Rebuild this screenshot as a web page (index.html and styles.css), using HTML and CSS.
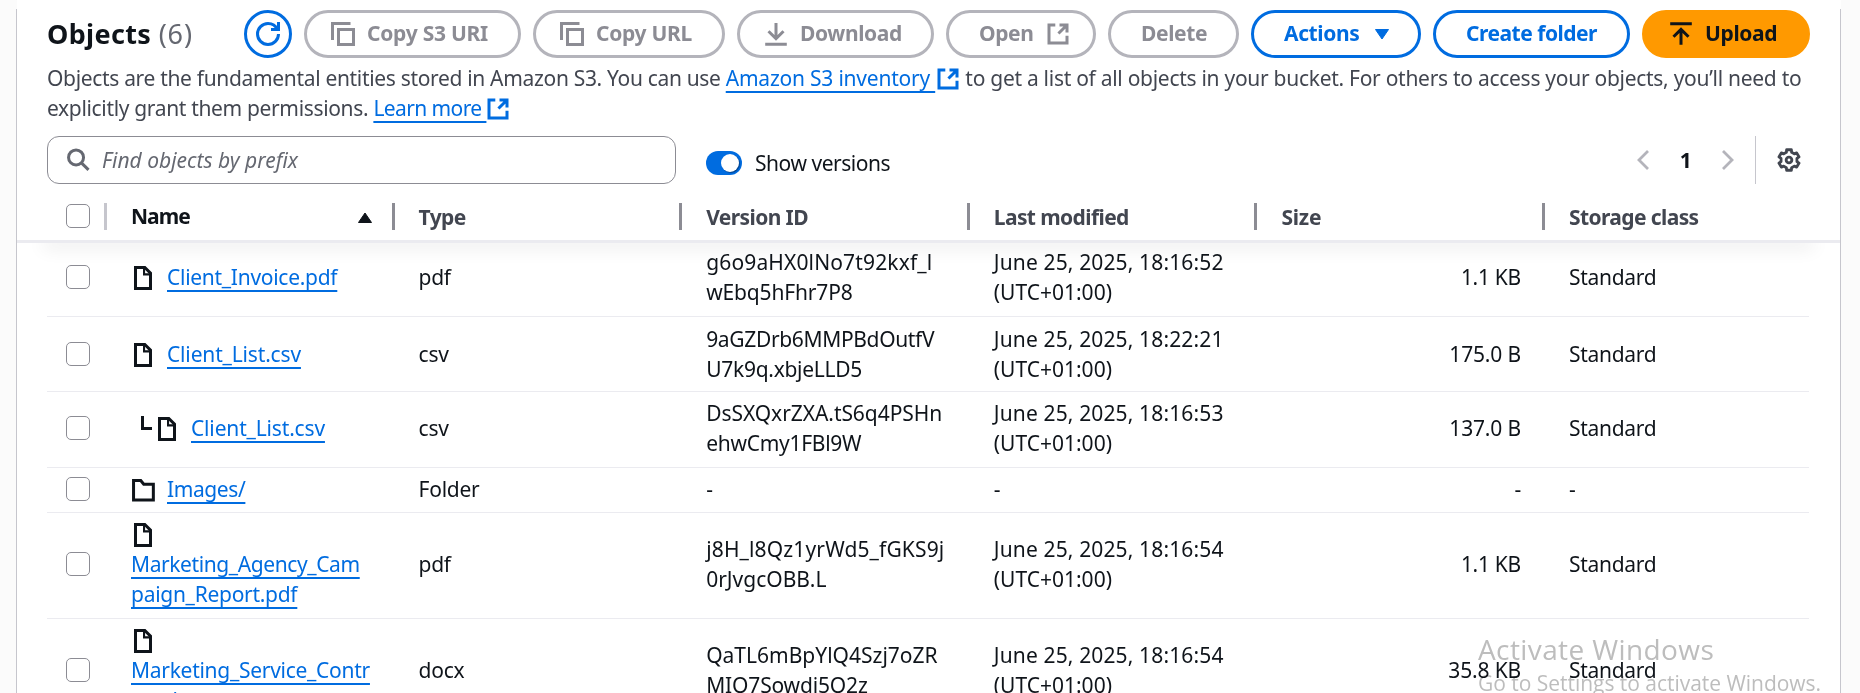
FILE: index.html
```html
<!DOCTYPE html>
<html lang="en">
<head>
<meta charset="utf-8">
<title>Objects</title>
<link rel="stylesheet" href="styles.css">
</head>
<body>
<svg class="defs" width="0" height="0">
  <symbol id="copy" viewBox="0 0 16 16"><path d="M1 12V1h12M5 5h10v10H5z"/></symbol>
  <symbol id="download" viewBox="0 0 16 16"><path d="M8 .7V11M3 6.2l5 4.9 5-4.9M.8 14.9h14.4"/></symbol>
  <symbol id="upload" viewBox="0 0 16 16"><path d="M.8 1.1h14.4M8 15.2V5M3 9.8l5-4.9 5 4.9"/></symbol>
  <symbol id="external" viewBox="0 0 16 16"><path d="M9 2h5v5M8.3 7.7 14 2M14 9.2V14H2V2h4.2"/></symbol>
  <symbol id="refresh" viewBox="0 0 16 16"><path d="M15 8c0 3.87-3.13 7-7 7s-7-3.13-7-7 3.13-7 7-7c2.79 0 5.2 1.63 6.33 4M10 5h5V0"/></symbol>
  <symbol id="file" viewBox="0 0 16 16"><path d="M3 1h6.2L13 4.800V15H3z"/><path class="thin" d="M8.7 1v4.600H13"/></symbol>
  <symbol id="folder" viewBox="0 0 16 16"><path d="M1.700 14.600V1.700h4.800l2 2.500h6.400v10.400z"/></symbol>
  <symbol id="search" viewBox="0 0 16 16"><circle cx="6.7" cy="6.3" r="5"/><path d="M10.300 9.900l4.700 4.700"/></symbol>
  <symbol id="gear" viewBox="0 0 16 16"><path d="M6.430 1.180H9.570L9.760 2.900 11.540 3.920 13.120 3.230 14.690 5.950 13.300 6.970V9.030L14.690 10.050 13.120 12.770 11.540 12.080 9.760 13.100 9.570 14.820H6.430L6.240 13.100 4.460 12.080 2.880 12.770 1.310 10.050 2.700 9.030V6.970L1.310 5.950 2.880 3.230 4.460 3.920 6.240 2.900Z"/><circle cx="8" cy="8" r="1.900"/></symbol>
</svg>
<div class="top-strip"></div>
<main class="panel">
  <header class="bar">
    <h1 class="title">Objects <span class="count">(6)</span></h1>
    <div class="actions">
      <button class="btn primary-line refresh"><svg class="icon"><use href="#refresh"/></svg></button>
      <button class="btn off copy-uri"><svg class="icon"><use href="#copy"/></svg><span>Copy S3 URI</span></button>
      <button class="btn off copy-url"><svg class="icon"><use href="#copy"/></svg><span>Copy URL</span></button>
      <button class="btn off download"><svg class="icon"><use href="#download"/></svg><span>Download</span></button>
      <button class="btn off open"><span>Open</span><svg class="icon"><use href="#external"/></svg></button>
      <button class="btn off delete"><span>Delete</span></button>
      <button class="btn primary-line menu"><span>Actions</span><svg class="caret" viewBox="0 0 16 13"><path d="M1.500 1.500h13L8 11z"/></svg></button>
      <button class="btn primary-line create"><span>Create folder</span></button>
      <button class="btn upload"><svg class="icon"><use href="#upload"/></svg><span>Upload</span></button>
    </div>
  </header>
  <p class="desc">Objects are the fundamental entities stored in Amazon S3. You can use <a class="link inv">Amazon S3 inventory&nbsp;</a><svg class="icon ext"><use href="#external"/></svg> <span class="rest">to get a list of all objects in your bucket. For others to access your objects, you’ll need to</span><br><span class="second">explicitly grant them permissions. </span><a class="link more">Learn more&nbsp;</a><svg class="icon ext"><use href="#external"/></svg></p>
  <div class="tools">
    <div class="search"><svg class="icon"><use href="#search"/></svg><span>Find objects by prefix</span></div>
    <div class="toggle"><span class="switch"><span class="knob"></span></span><span>Show versions</span></div>
    <div class="pager">
      <svg class="chev" viewBox="0 0 12 20"><path d="M11 1 2 10l9 9"/></svg>
      <span class="page">1</span>
      <svg class="chev" viewBox="0 0 12 20"><path d="M1 1l9 9-9 9"/></svg>
    </div>
    <div class="prefs"><svg class="icon"><use href="#gear"/></svg></div>
  </div>
  <section class="table">
    <div class="row head">
      <div class="cell pick"><span class="box"></span></div>
      <div class="cell sorted">Name<svg class="caret up" viewBox="0 0 16 13"><path d="M1.500 11.500h13L8 2z"/></svg></div>
      <div class="cell">Type</div>
      <div class="cell">Version ID</div>
      <div class="cell">Last modified</div>
      <div class="cell size-h">Size</div>
      <div class="cell last">Storage class</div>
    </div>
    <div class="row r1">
      <div class="cell pick"><span class="box"></span></div>
      <div class="cell name"><svg class="icon"><use href="#file"/></svg><a class="link">Client_Invoice.pdf</a></div>
      <div class="cell">pdf</div>
      <div class="cell"><span class="wide">g6o9aHX0lNo7t92kxf_l</span><br><span class="snug">wEbq5hFhr7P8</span></div>
      <div class="cell"><span class="wide">June 25, 2025, 18:16:52</span><br><span class="flat">(UTC+01:00)</span></div>
      <div class="cell size">1.1 KB</div>
      <div class="cell">Standard</div>
    </div>
    <div class="row r2">
      <div class="cell pick"><span class="box"></span></div>
      <div class="cell name"><svg class="icon"><use href="#file"/></svg><a class="link snug">Client_List.csv</a></div>
      <div class="cell">csv</div>
      <div class="cell"><span class="close">9aGZDrb6MMPBdOutfV</span><br>U7k9q.xbjeLLD5</div>
      <div class="cell"><span class="wide">June 25, 2025, 18:22:21</span><br><span class="flat">(UTC+01:00)</span></div>
      <div class="cell size snug">175.0 B</div>
      <div class="cell">Standard</div>
    </div>
    <div class="row r3">
      <div class="cell pick"><span class="box"></span></div>
      <div class="cell name nested"><svg class="elbow" viewBox="0 0 12 14"><path d="M1.500 0v12.500H11"/></svg><svg class="icon"><use href="#file"/></svg><a class="link snug">Client_List.csv</a></div>
      <div class="cell">csv</div>
      <div class="cell"><span class="even">DsSXQxrZXA.tS6q4PSHn</span><br>ehwCmy1FBl9W</div>
      <div class="cell"><span class="wide">June 25, 2025, 18:16:53</span><br><span class="flat">(UTC+01:00)</span></div>
      <div class="cell size snug">137.0 B</div>
      <div class="cell">Standard</div>
    </div>
    <div class="row r4">
      <div class="cell pick"><span class="box"></span></div>
      <div class="cell name"><svg class="icon"><use href="#folder"/></svg><a class="link tight">Images/</a></div>
      <div class="cell">Folder</div>
      <div class="cell">-</div>
      <div class="cell">-</div>
      <div class="cell size">-</div>
      <div class="cell">-</div>
    </div>
    <div class="row r5">
      <div class="cell pick"><span class="box"></span></div>
      <div class="cell name"><svg class="icon"><use href="#file"/></svg><br><a class="link"><span class="tight">Marketing_Agency_Cam</span><br>paign_Report.pdf</a></div>
      <div class="cell">pdf</div>
      <div class="cell"><span class="wide">j8H_l8Qz1yrWd5_fGKS9j</span><br><span class="flat">0rJvgcOBB.L</span></div>
      <div class="cell"><span class="wide">June 25, 2025, 18:16:54</span><br><span class="flat">(UTC+01:00)</span></div>
      <div class="cell size">1.1 KB</div>
      <div class="cell">Standard</div>
    </div>
    <div class="row r6">
      <div class="cell pick"><span class="box"></span></div>
      <div class="cell name"><svg class="icon"><use href="#file"/></svg><br><a class="link">Marketing_Service_Contr<br>act.docx</a></div>
      <div class="cell">docx</div>
      <div class="cell"><span class="flat">QaTL6mBpYlQ4Szj7oZR</span><br><span class="snug">MIO7Sowdi5O2z</span></div>
      <div class="cell"><span class="wide">June 25, 2025, 18:16:54</span><br><span class="flat">(UTC+01:00)</span></div>
      <div class="cell size snug">35.8 KB</div>
      <div class="cell">Standard</div>
    </div>
  </section>
</main>
<aside class="watermark"><div class="wm-title">Activate Windows</div><div class="wm-sub">Go to Settings to activate Windows.</div></aside>
</body>
</html>
```
FILE: styles.css
```css
* { box-sizing: border-box; }
body {
  margin: 0;
  height: 693px;
  overflow: hidden;
  position: relative;
  background: #fbfbfb;
  color: #0f141a;
  font: 21px/30px "Noto Sans", "Open Sans", sans-serif;
  letter-spacing: -0.28px;
}
.defs { display: block; }
.top-strip { height: 9px; margin: 0 19px 0 17px; background: #fff; }
.panel {
  margin: 0 19px 0 16px;
  height: 684px;
  overflow: hidden;
  padding-top: 1px;
  background: #fff;
  border: solid #c6c6cd;
  border-width: 0 1px;
}

/* icons */
.icon { width: 24px; height: 24px; flex: none; fill: none; stroke: currentColor; stroke-width: 2; }
.thin { stroke-width: 1.4; }
.caret { width: 16px; height: 13px; fill: currentColor; stroke: currentColor; stroke-width: 1; stroke-linejoin: round; }

/* heading and buttons */
.bar { display: flex; justify-content: space-between; padding: 0 30px; height: 48px; }
.title { margin: 0; font-size: 27px; line-height: 48px; letter-spacing: 0.35px; }
.count { font-weight: 400; color: #656871; letter-spacing: 0.9px; }
.actions { display: flex; gap: 12px; }
.btn {
  display: flex;
  align-items: center;
  gap: 12px;
  height: 48px;
  padding: 0 0 0 24px;
  border: 3px solid currentColor;
  border-radius: 30px;
  background: #fff;
  font: bold 21px/30px "Noto Sans", sans-serif;
  letter-spacing: -0.38px;
  white-space: nowrap;
}
.btn span { padding-bottom: 2px; }
.primary-line { color: #006ce0; }
.off { color: #8c8c94; border-color: #b4b4bb; }
.refresh { width: 48px; padding: 0 0 0 9px; }
.copy-uri { width: 217px; letter-spacing: -0.25px; }
.copy-url { width: 192px; letter-spacing: -0.28px; }
.download { width: 197px; }
.open { width: 150px; padding-left: 30px; }
.delete { width: 131px; padding-left: 30px; }
.menu { width: 170px; padding-left: 30px; gap: 15px; }
.create { width: 197px; padding-left: 30px; letter-spacing: -0.49px; }
.upload { width: 168px; color: #0f141a; background: #ff9900; border-color: #ff9900; }

/* description */
.desc { margin: 5px 0 0; padding-left: 30px; color: #424650; letter-spacing: -0.325px; white-space: nowrap; }
.link { color: #006ce0; text-decoration: underline 2px; text-underline-offset: 5px; text-decoration-skip-ink: none; }
.inv { letter-spacing: -0.22px; }
.second { letter-spacing: -0.34px; }
.more { letter-spacing: -0.6px; }
.rest { letter-spacing: -0.28px; }
.ext { color: #006ce0; vertical-align: -5px; margin-left: 1px; }
.more + .ext { margin-left: 0; }

/* filter row */
.tools { display: flex; height: 48px; margin-top: 13px; padding: 0 30px; }
.search {
  display: flex;
  align-items: center;
  gap: 12px;
  width: 629px;
  padding-left: 18px;
  border: 1px solid #8c8c94;
  border-radius: 12px;
  color: #656871;
}
.search span { font-style: italic; letter-spacing: 0; padding-bottom: 1px; }
.toggle { display: flex; align-items: center; gap: 13px; margin-left: 30px; padding-top: 5px; letter-spacing: -0.46px; }
.switch { width: 36px; height: 24px; padding: 3px; border-radius: 12px; background: #006ce0; display: flex; justify-content: flex-end; }
.knob { width: 18px; height: 18px; border-radius: 50%; background: #fff; box-shadow: 1px 1px 1px #00438f; }
.pager { display: flex; align-items: center; margin-left: auto; padding-right: 21px; }
.chev { width: 12px; height: 20px; fill: none; stroke: #b4b4bb; stroke-width: 2.8; }
.page { width: 73px; text-align: center; font-weight: 700; padding-bottom: 1px; }
.prefs { display: flex; align-items: center; width: 55px; padding-left: 21px; border-left: 1px solid #c6c6cd; color: #424650; }
.prefs .icon { stroke-width: 1.9; stroke-linejoin: round; }

/* table */
.row {
  display: grid;
  grid-template-columns: 60px repeat(5, 287.6px) 1fr;
  align-items: center;
  margin: 0 31px 0 30px;
  padding-bottom: 2px;
  border-bottom: 1px solid #ebebf0;
}
.cell { padding-left: 24px; white-space: nowrap; }
.cell.pick { padding-left: 19px; }
.box { display: block; width: 24px; height: 24px; border: 1.5px solid #8c8c94; border-radius: 5px; background: #fff; }
.head {
  height: 59px;
  margin: 0;
  padding: 8px 30px 0;
  border-bottom: 3px solid #ebebf0;
  color: #424650;
  font-weight: 700;
  letter-spacing: -0.6px;
  box-shadow: 0 30px 18px -26px rgba(0, 7, 22, 0.12);
}
.head .cell { height: 27px; line-height: 28px; border-right: 3px solid #8c8c94; }
.head .pick { border-color: #c6c6cd; padding-top: 1.5px; }
.head .last { border: 0; }
.head .size-h { letter-spacing: -0.2px; }
.sorted { display: flex; align-items: center; justify-content: space-between; padding-right: 19px; color: #0f141a; letter-spacing: -1px; }
.up { margin-top: 2px; }
.name .icon { vertical-align: -5px; margin-right: 12px; }
.nested { padding-left: 34px; }
.elbow { width: 12px; height: 14px; fill: none; stroke: #0f141a; stroke-width: 3; vertical-align: 6px; margin-right: 2px; }
.size { text-align: right; padding-right: 24px; }
.r1 { height: 74px; padding-bottom: 5px; }
.r2 { height: 75px; padding-bottom: 1px; }
.r3 { height: 76px; padding-bottom: 4px; }
.r4 { height: 45px; }
.r5, .r6 { height: 106px; padding-bottom: 4px; }
.wide { letter-spacing: 0.14px; }
.flat { letter-spacing: 0; }
.even { letter-spacing: -0.06px; }
.snug { letter-spacing: -0.16px; }
.close { letter-spacing: -0.34px; }
.tight { letter-spacing: -0.4px; }

/* system notice over the page */
.watermark {
  position: absolute;
  left: 1478px;
  top: 630px;
  color: #bdbdbd;
  font-family: "Open Sans", sans-serif;
  mix-blend-mode: multiply;
  white-space: nowrap;
}
.wm-title { font-size: 28px; line-height: 38px; letter-spacing: 0.4px; }
.wm-sub { font-size: 21px; line-height: 30px; letter-spacing: -0.03px; }
```
